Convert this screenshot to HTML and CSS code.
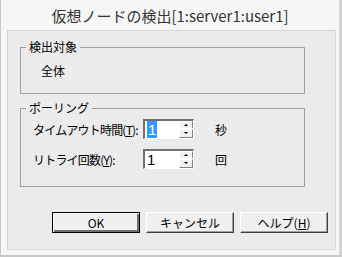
FILE: index.html
```html
<!DOCTYPE html>
<html lang="ja">
<head>
  <meta charset="UTF-8">
  <title>仮想ノードの検出</title>
  <link rel="stylesheet" href="styles.css">
</head>
<body>

  <div class="window">
    <div class="title">仮想ノードの検出[1:server1:user1]</div>

    <div class="panel">
      <fieldset class="group group-target">
        <legend>検出対象</legend>
        <div class="target">全体</div>
      </fieldset>

      <fieldset class="group group-polling">
        <legend>ポーリング</legend>
        <div class="row">
          <span class="label">タイムアウト時間(<u>T</u>):</span>
          <div class="spin">
            <span class="value"><span class="selected">1</span></span>
            <div class="arrows">
              <span class="arrow up"></span>
              <span class="arrow down"></span>
            </div>
          </div>
          <span class="unit">秒</span>
        </div>
        <div class="row">
          <span class="label">リトライ回数(<u>Y</u>):</span>
          <div class="spin">
            <span class="value">1</span>
            <div class="arrows">
              <span class="arrow up"></span>
              <span class="arrow down"></span>
            </div>
          </div>
          <span class="unit">回</span>
        </div>
      </fieldset>

      <div class="buttons">
        <button class="btn default">OK</button>
        <button class="btn">キャンセル</button>
        <button class="btn">ヘルプ(<u>H</u>)</button>
      </div>
    </div>
  </div>

</body>
</html>
```

FILE: styles.css
```css
body {
  margin: 0;
  font-family: "Noto Sans CJK JP", "Noto Sans", sans-serif;
  font-size: 12px;
  color: #000;
  background: #fff;
}

.window {
  width: 338px;
  height: 255px;
  border-left: 1px solid #c8c8c8;
  border-right: 3px solid #d4d4d4;
  border-bottom: 2px solid #c8c8c8;
  background: repeating-conic-gradient(#fbfbfb 0 25%, #f1f1f1 0 50%) 0 0 / 2px 2px;
}

.title {
  height: 30px;
  line-height: 32px;
  text-align: center;
  font-size: 15px;
  color: #333;
}

.panel {
  margin: 0 3px 0 6px;
  height: 218px;
  border: 1px solid #d6d6d6;
  background: repeating-conic-gradient(#f3f3f3 0 25%, #e4e4e4 0 50%) 0 0 / 2px 2px;
}

.group {
  margin: 0 30px 0 12px;
  padding: 0;
  border: 1px solid #a0a0a0;
  min-width: 0;
}

.group legend {
  margin-left: 5px;
  padding: 0 3px;
  line-height: 14px;
}

.group-target {
  margin-top: 9px;
  height: 52px;
}

.target {
  padding: 8px 0 0 20px;
}

.group-polling {
  margin-top: 7px;
  height: 84px;
}

.row {
  display: flex;
  align-items: center;
  height: 20px;
  margin-top: 4px;
}

.row + .row {
  margin-top: 10px;
}

.label {
  width: 110px;
  padding-left: 12px;
  letter-spacing: -0.8px;
}

.spin {
  display: flex;
  width: 48px;
  height: 17px;
  border-top: 2px solid #707070;
  border-left: 2px solid #707070;
  border-right: 1px solid #fff;
  border-bottom: 1px solid #fff;
  background: #fff;
}

.value {
  flex: 1;
  padding-left: 2px;
  font-family: "Liberation Sans", sans-serif;
  font-size: 15px;
  line-height: 17px;
}

.selected {
  background: #3399ff;
  color: #fff;
  padding: 0 1px;
}

.arrows {
  display: flex;
  flex-direction: column;
  width: 14px;
}

.arrow {
  position: relative;
  height: 6px;
  margin-bottom: 1px;
  background: #f0f0f0;
  border-top: 1px solid #fff;
  border-left: 1px solid #fff;
  border-right: 1px solid #808080;
}

.arrow.down {
  height: 7px;
  margin: 0;
  border-bottom: 1px solid #808080;
}

.arrow::after {
  content: "";
  position: absolute;
  left: 4px;
  top: 2px;
  border-left: 2px solid transparent;
  border-right: 2px solid transparent;
}

.arrow.up::after {
  border-bottom: 2px solid #000;
}

.arrow.down::after {
  border-top: 2px solid #000;
}

.unit {
  margin-left: 21px;
}

.buttons {
  display: flex;
  gap: 6px;
  margin: 25px 0 0 44px;
}

.btn {
  width: 88px;
  height: 21px;
  padding: 0;
  font-family: "Noto Sans CJK JP", sans-serif;
  font-size: 12px;
  color: #000;
  background: #f0f0f0;
  border: 1px solid;
  border-color: #fff #404040 #404040 #fff;
  box-shadow: inset -1px -1px 0 #a0a0a0;
}

.btn.default {
  border: 1px solid #000;
  box-shadow: inset 1px 1px 0 #fff, inset -2px -2px 0 #707070;
}
```
